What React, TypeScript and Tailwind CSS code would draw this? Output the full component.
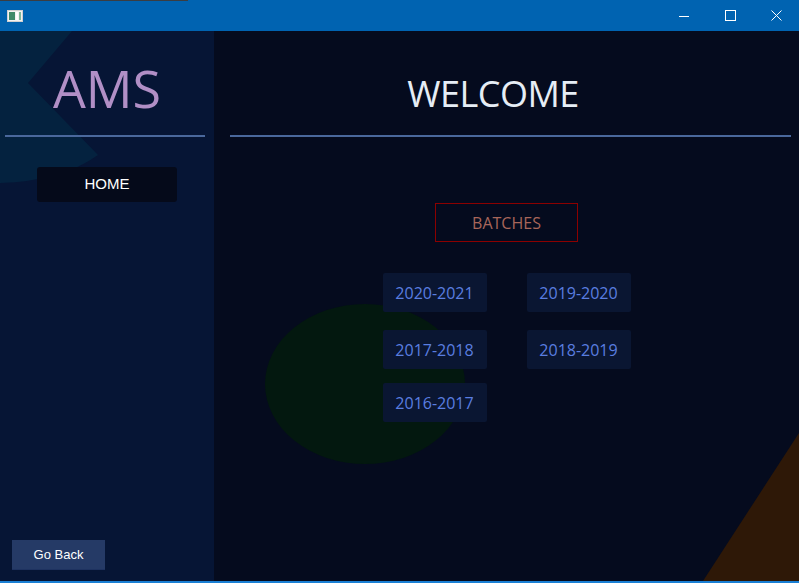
import React from "react";

const batches: string[][] = [
  ["2020-2021", "2019-2020"],
  ["2017-2018", "2018-2019"],
  ["2016-2017"],
];

const WindowIcon = () => (
  <svg width="16" height="12" viewBox="0 0 16 12">
    <rect x="0.5" y="0.5" width="15" height="11" fill="#f2f2f2" stroke="#d0d0d0" />
    <rect x="2" y="2" width="6" height="8" fill="#3f8a6a" />
    <rect x="9" y="2" width="2" height="8" fill="#ffffff" />
    <rect x="12" y="2" width="2" height="8" fill="#7fb89a" />
  </svg>
);

const TitleBar = () => (
  <div className="relative h-[31px] bg-[#0063b1] flex items-center">
    <div className="absolute top-0 left-0 w-[188px] h-px bg-[#3a3d42]" />
    <div className="ml-[7px] mt-[1px]">
      <WindowIcon />
    </div>
    <div className="ml-auto flex h-full">
      {/* minimize */}
      <div className="w-[46px] h-full flex items-center justify-center">
        <svg width="10" height="10" viewBox="0 0 10 10">
          <line x1="0" y1="5.5" x2="10" y2="5.5" stroke="white" strokeWidth="1" />
        </svg>
      </div>
      {/* maximize */}
      <div className="w-[46px] h-full flex items-center justify-center">
        <svg width="11" height="11" viewBox="0 0 11 11">
          <rect x="0.5" y="0.5" width="10" height="10" fill="none" stroke="white" strokeWidth="1" />
        </svg>
      </div>
      {/* close */}
      <div className="w-[46px] h-full flex items-center justify-center">
        <svg width="11" height="11" viewBox="0 0 11 11">
          <path d="M0.5 0.5 L10.5 10.5 M10.5 0.5 L0.5 10.5" stroke="white" strokeWidth="1" />
        </svg>
      </div>
    </div>
  </div>
);

const Sidebar = () => (
  <aside className="relative w-[214px] bg-[#061535] flex flex-col overflow-hidden">
    {/* decorative shape */}
    <svg className="absolute top-0 left-0" width="110" height="160" viewBox="0 0 110 160">
      <path d="M0 0 L72 0 L28 52 L98 124 Q62 150 0 152 Z" fill="#04223f" />
    </svg>

    <div className="relative flex flex-col flex-1">
      <h1
        className="mt-[31px] text-center text-[52px] leading-none text-[#b18fc6]"
        style={{ fontFamily: '"Open Sans", "Noto Sans", sans-serif' }}
      >
        AMS
      </h1>
      <div className="mt-[21px] ml-[5px] mr-[9px] h-[2px] bg-[#4a689c]" />

      <button
        className="mt-[30px] mx-auto w-[140px] h-[35px] rounded-[3px] bg-[#050a1a] text-white text-[15px]"
        style={{ fontFamily: '"Liberation Sans", Arial, sans-serif' }}
      >
        HOME
      </button>

      <button
        className="mt-auto mb-[11px] ml-[12px] w-[93px] h-[30px] bg-[#253a66] text-white text-[13px] border-b border-[#1e3260]"
        style={{ fontFamily: '"Liberation Sans", Arial, sans-serif' }}
      >
        Go Back
      </button>
    </div>
  </aside>
);

const Main = () => (
  <main className="relative flex-1 bg-[#050b1e] overflow-hidden">
    {/* decorative shapes */}
    <div className="absolute left-[51px] top-[273px] w-[200px] h-[160px] rounded-[50%] bg-[#03180f]" />
    <svg className="absolute right-0 bottom-0" width="96" height="148" viewBox="0 0 96 148">
      <polygon points="96,0 0,148 96,148" fill="#2e1807" />
    </svg>

    <div
      className="relative flex flex-col items-stretch"
      style={{ fontFamily: '"Open Sans", "Noto Sans", sans-serif' }}
    >
      <h2 className="pt-[45px] pr-[27px] text-center text-[36px] leading-none tracking-[-0.5px] text-[#e6edf5]">
        WELCOME
      </h2>
      <div className="mt-[23px] ml-[16px] mr-[8px] h-[2px] bg-[#4a689c]" />

      {/* red framed label */}
      <div className="mt-[66px] self-center p-px bg-[#8c0000]">
        <div className="w-[141px] h-[37px] bg-[#050b1e] flex items-center justify-center text-[16px] text-[#a8665a]">
          BATCHES
        </div>
      </div>

      <div className="mt-[31px] self-center flex flex-col w-[248px]">
        {batches.map((row, i) => (
          <div
            key={i}
            className={`flex gap-[40px] ${i === 1 ? "mt-[18px]" : i === 2 ? "mt-[14px]" : ""}`}
          >
            {row.map((b) => (
              <button
                key={b}
                className="w-[104px] h-[39px] rounded-[2px] bg-[#0a1632] text-[16px] text-[#5a7ee0]"
              >
                {b}
              </button>
            ))}
          </div>
        ))}
      </div>
    </div>
  </main>
);

export default function App() {
  return (
    <div className="w-[799px] h-[583px] flex flex-col overflow-hidden bg-[#050b1e]">
      <TitleBar />
      <div className="flex flex-1">
        <Sidebar />
        <Main />
      </div>
      <div className="h-[2px] bg-[#1a7fd4]" />
    </div>
  );
}
